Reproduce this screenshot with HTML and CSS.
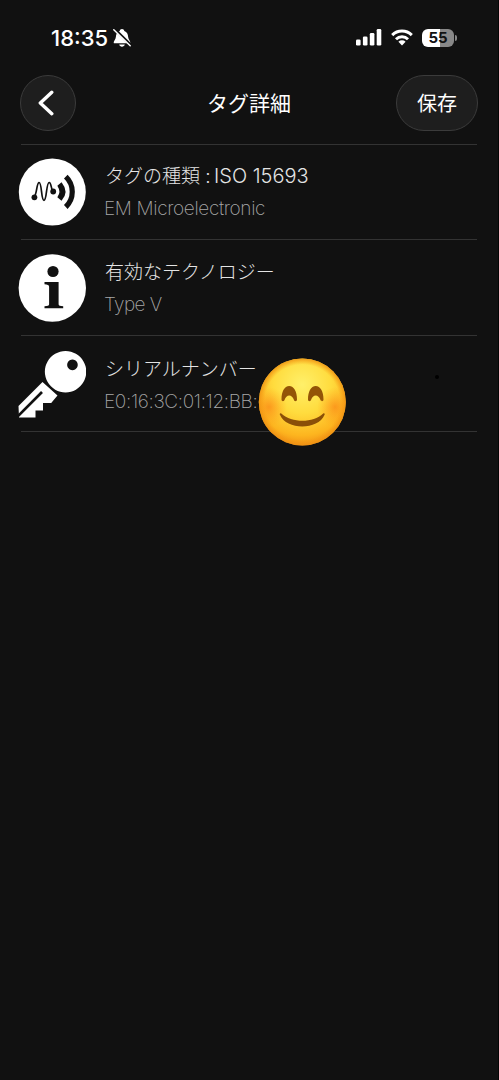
FILE: index.html
```html
<!DOCTYPE html>
<html lang="ja">
<head>
<meta charset="utf-8">
<meta name="viewport" content="width=device-width">
<title>タグ詳細</title>
<link rel="stylesheet" href="styles.css">
</head>
<body>
<main class="screen">
  <div class="status">
    <div class="clock">
      <span class="time">18:35</span>
      <svg class="bell" width="20" height="20" viewBox="0 0 20 20">
        <path fill="#fff" d="M10 1C8.700 1 7.900 1.900 7.700 2.900 5 3.800 4 6 3.900 8.800 3.800 11.500 1.700 13 1.700 14.400c0 .6.4.8.9.8h14.800c.5 0 .9-.2.9-.8 0-1.400-2.100-2.900-2.200-5.600C16 6 15 3.800 12.300 2.900 12.100 1.900 11.300 1 10 1zM7.200 16.600c.3 1.300 1.400 2.200 2.800 2.200s2.500-.9 2.800-2.200z"/>
        <path d="M3 1.600 19.200 17.400" stroke="#111" stroke-width="2.800"/>
        <path d="M1.800 1.800 18.200 17.800" stroke="#fff" stroke-width="1.500" stroke-linecap="round"/>
      </svg>
    </div>
    <div class="indicators">
      <svg class="signal" width="26" height="17" viewBox="0 0 26 17" fill="#fff">
        <rect x="0" y="10.500" width="4.600" height="6" rx="1.300"/>
        <rect x="6.900" y="7.500" width="4.600" height="9" rx="1.300"/>
        <rect x="13.800" y="4" width="4.600" height="12.500" rx="1.300"/>
        <rect x="20.700" y="0" width="4.600" height="16.500" rx="1.300"/>
      </svg>
      <svg class="wifi" width="22" height="17" viewBox="0 0 22 17" fill="none" stroke="#fff" stroke-width="3">
        <path d="M1.200 6.100a14 14 0 0 1 19.600 0"/>
        <path d="M5 10.200a8.600 8.600 0 0 1 12 0"/>
        <path d="M11 16.400 7.400 12.800a5.200 5.200 0 0 1 7.200 0z" fill="#fff" stroke="none"/>
      </svg>
      <div class="battery"><span class="level">55</span></div>
    </div>
  </div>

  <header class="nav">
    <button class="pill back" aria-label="戻る">
      <svg width="16" height="26" viewBox="0 0 16 26" fill="none" stroke="#fff" stroke-width="3.400" stroke-linecap="round" stroke-linejoin="round"><path d="M13.800 2.300 2.300 13l11.500 10.700"/></svg>
    </button>
    <h1 class="title">タグ詳細</h1>
    <button class="pill save">保存</button>
  </header>

  <section class="list">
    <article class="row">
      <svg class="icon" width="68" height="68" viewBox="0 0 68 68">
        <circle cx="34.300" cy="34" r="33.500" fill="#fff"/>
        <path d="M16 39c3-2 2.500-14 5-14.500 3-.3 2 17.800 5 17.800s2-17.800 5.300-17.800c2.200 0 1.700 8.500 4.200 9" fill="none" stroke="#111" stroke-width="1.700"/>
        <circle cx="16.400" cy="39.300" r="2.900" fill="#111"/>
        <circle cx="35.200" cy="33.500" r="2.900" fill="#111"/>
        <path d="M43.400 25.400q6.600 8.100 0 16.200l-3-2.600q3.600-5.500 0-11z" fill="#111" stroke="#111" stroke-width="1.600"/>
        <path d="M47.800 18.700a21 21 0 0 1 0 30.300" fill="none" stroke="#111" stroke-width="5.200"/>
      </svg>
      <div class="copy"><h2 class="label">タグの種類 : <span class="iso">ISO 15693</span></h2><p class="value maker">EM Microelectronic</p></div>
    </article>
    <article class="row">
      <svg class="icon" width="68" height="68" viewBox="0 0 68 68">
        <circle cx="34.300" cy="34" r="33.700" fill="#fff"/>
        <circle cx="35" cy="17.500" r="5.600" fill="#111"/>
        <path fill="#111" d="M26.500 28h14.100v22.300c0 1.500 1.600 1.700 4.600 1.900v2H26.500v-2c3-.2 4.600-.4 4.600-1.900V32.700c0-1.900-1.700-2.200-4.600-2.500z"/>
      </svg>
      <div class="copy"><h2 class="label">有効なテクノロジー</h2><p class="value type">Type V</p></div>
    </article>
    <article class="row last">
      <svg class="icon" width="68" height="68" viewBox="0 0 68 68">
        <path d="M47.500 0a20.700 20.700 0 1 0 .1 0zM54.500 8.600a5.300 5.300 0 1 1-.1 0z" fill="#fff" fill-rule="evenodd"/>
        <path fill="#fff" d="M24.500 31 39.500 44.500l-6.300 7.500H25v7.500h-7.500v7H1L.5 55z"/>
        <path d="M-.5 65.500 24 41" stroke="#111" stroke-width="2.600"/>
      </svg>
      <div class="copy"><h2 class="label">シリアルナンバー</h2><p class="value serial">E0:16:3C:01:12:BB:</p></div>
      <svg class="emoji" width="90" height="90" viewBox="0 0 90 90">
        <defs>
          <radialGradient id="face" cx=".5" cy=".3" r=".73">
            <stop offset="0" stop-color="#fff06a"/><stop offset=".45" stop-color="#ffdc3e"/><stop offset=".8" stop-color="#fdb51f"/><stop offset="1" stop-color="#ef8914"/>
          </radialGradient>
          <radialGradient id="blush"><stop offset="0" stop-color="#fa8014" stop-opacity=".65"/><stop offset="1" stop-color="#ff9818" stop-opacity="0"/></radialGradient>
          <radialGradient id="rim"><stop offset=".86" stop-color="#f79a13" stop-opacity="0"/><stop offset="1" stop-color="#ee9113" stop-opacity=".85"/></radialGradient>
          <clipPath id="disc"><circle cx="45.300" cy="45" r="43.500"/></clipPath>
        </defs>
        <circle cx="45.300" cy="45" r="43.500" fill="url(#face)"/>
        <g clip-path="url(#disc)"><ellipse cx="12" cy="50" rx="18" ry="20" fill="url(#blush)"/><ellipse cx="78" cy="50" rx="18" ry="20" fill="url(#blush)"/></g>
        <circle cx="45.300" cy="45" r="43.500" fill="url(#rim)"/>
        <path d="M24.500 42.500c0-8 3-13.500 7.700-13.500s7.800 5.500 7.800 13.500c0 2-2.300 2.300-3 .5-1.200-3-2.700-4.500-4.800-4.500s-3.600 1.500-4.700 4.500c-.7 1.800-3 1.500-3-.5z" fill="#935407"/>
        <path d="M51 42.500c0-8 3-13.500 7.700-13.500s7.800 5.500 7.800 13.500c0 2-2.300 2.300-3 .5-1.200-3-2.700-4.500-4.800-4.500s-3.600 1.500-4.700 4.500c-.7 1.800-3 1.500-3-.5z" fill="#935407"/>
        <path d="M24.300 56.500C35 66.200 56 66.200 66.200 56.500c1-.9 1.900 0 1.400 1.300C61 73.500 29.500 73.500 22.900 57.800c-.5-1.300.4-2.200 1.400-1.300z" fill="#8b4f08"/>
      </svg>
      <span class="speck"></span>
    </article>
  </section>
</main>
</body>
</html>
```
FILE: styles.css
```css
* { box-sizing: border-box; }
body { margin: 0; background: #111; color: #fff; font-family: Inter, "Noto Sans CJK JP", sans-serif; }
.screen { width: 499px; height: 1080px; overflow: hidden; background: #111; border-right: 1px solid #050505; }
.status { height: 75px; padding: 0 44px 0 51px; display: flex; justify-content: space-between; align-items: center; }
.clock, .indicators { display: flex; align-items: center; }
.clock { gap: 4px; }
.time { font-size: 22px; line-height: 26px; font-weight: 550; width: 57px; white-space: nowrap; }
.bell { display: block; }
.indicators { gap: 9px; }
.battery { width: 32px; height: 18px; border-radius: 6px; position: relative; background: linear-gradient(90deg, #fff 55%, #888 55%); color: #111; text-align: center; font-size: 15px; line-height: 18px; font-weight: 650; }
.battery::after { content: ""; position: absolute; right: -3px; top: 6px; width: 2px; height: 6px; border-radius: 0 2px 2px 0; background: #888; }
.nav { height: 69px; padding: 0 20px; display: grid; grid-template-columns: 82px 1fr 82px; align-items: start; }
.pill { height: 56px; padding: 0; border: 1px solid #3b3b3b; border-radius: 28px; background: #1e1e1e; color: #fff; font: 400 20px/1 "Noto Sans CJK JP", sans-serif; display: flex; align-items: center; justify-content: center; }
.back { width: 56px; padding-right: 4px; }
.save { width: 82px; }
.title { margin: 0; text-align: center; font: 400 21px/54px "Noto Sans CJK JP", sans-serif; }
.list { margin: 0 21px; border-top: 1px solid #333; }
.row { height: 96px; border-bottom: 1px solid #333; display: flex; position: relative; padding-top: 13px; }
.row:first-child { height: 95px; }
.row.last { height: 96px; padding-top: 15px; }
.row:nth-child(2) { padding-top: 14px; }
.icon { width: 68px; height: 68px; margin-left: -3px; flex: none; overflow: hidden; }
.copy { margin-left: 19px; padding-top: 3px; white-space: nowrap; }
.label { margin: 0; font: 300 19px/32px Inter, "Noto Sans CJK JP", sans-serif; color: #e4e4e4; }
.iso { font-size: 20px; font-weight: 350; line-height: 1; margin-left: -2px; }
.value { margin: 0 0 0 -1px; font: 250 19px/32px Inter, sans-serif; letter-spacing: -.35px; color: #a8a8a8; }
.type { letter-spacing: -.6px; }
.serial { line-height: 31px; }
.emoji { position: absolute; left: 236px; top: 21px; }
.speck { position: absolute; left: 414px; top: 39px; width: 4px; height: 4px; border-radius: 50%; background: #000; }
```
